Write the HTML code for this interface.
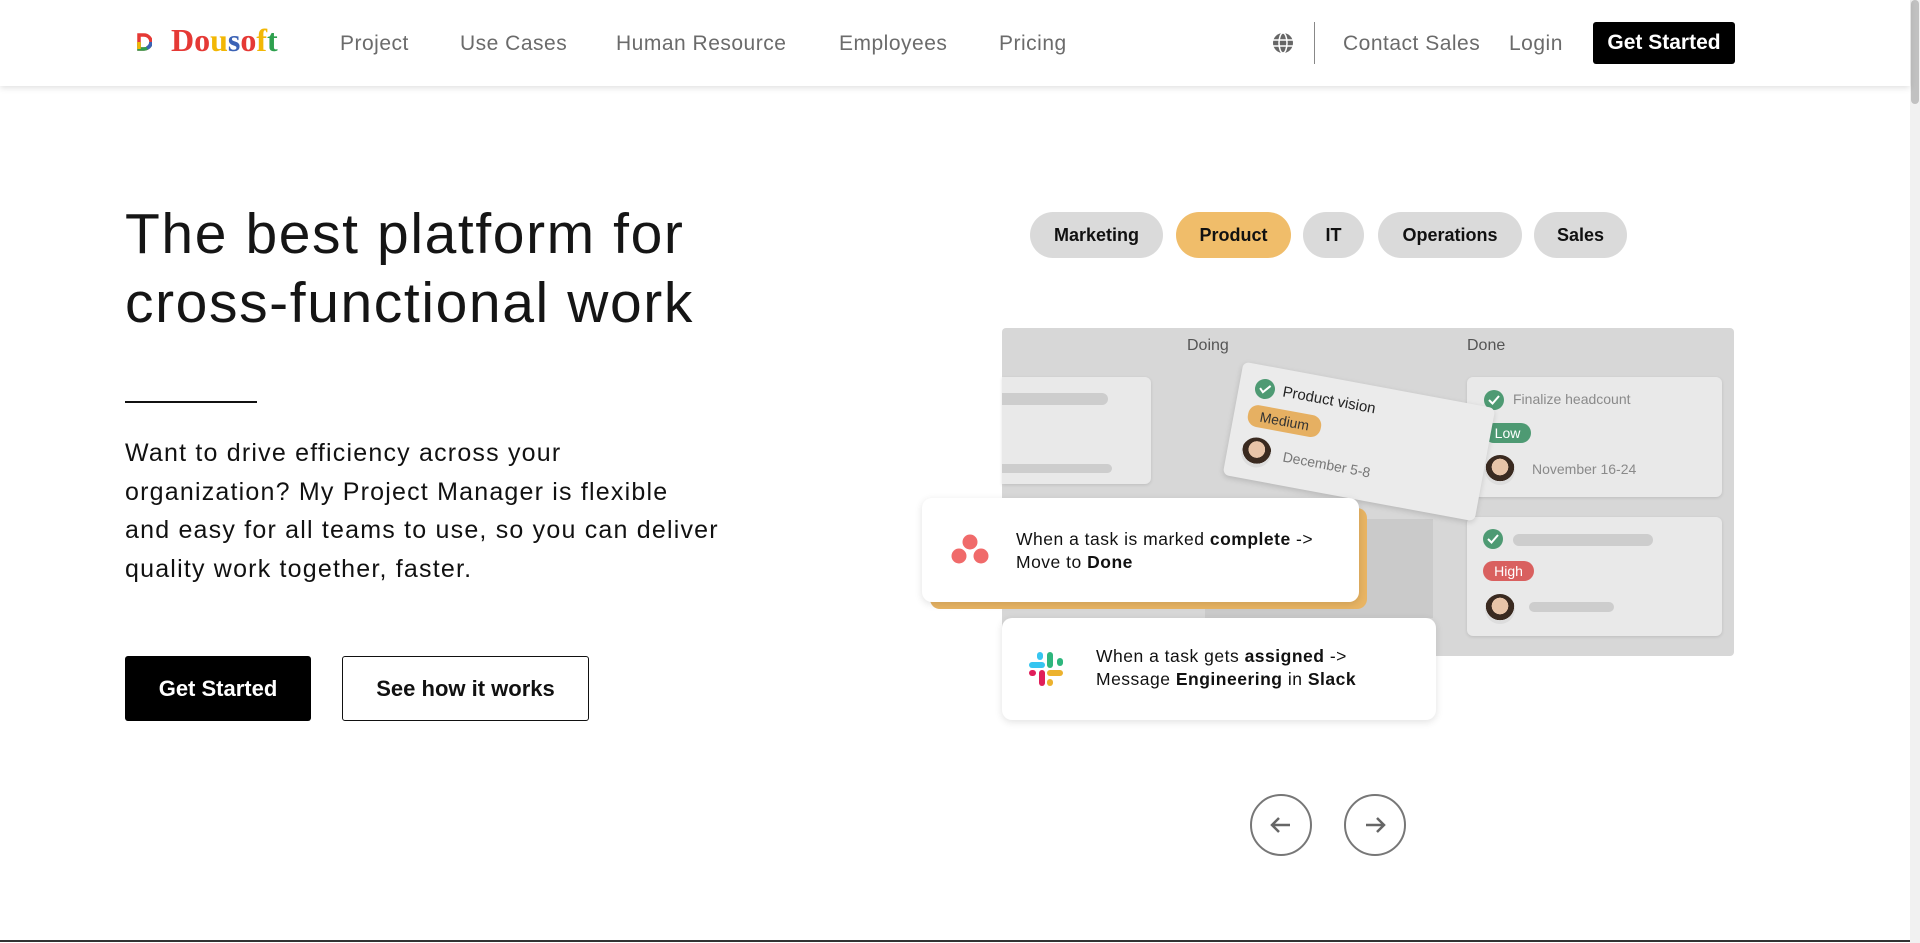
<!DOCTYPE html>
<html><head><meta charset="utf-8"><style>
*{margin:0;padding:0;box-sizing:border-box}
body{width:1920px;height:943px;overflow:hidden;background:#fff;font-family:"Liberation Sans",sans-serif;position:relative;color:#111}
.a{position:absolute}
.hdr{left:0;top:0;width:1910px;height:86px;background:#fff;box-shadow:0 2px 6px rgba(0,0,0,.12);z-index:5}
.nav{top:32px;font-size:21px;color:#6b6b6b;white-space:nowrap;letter-spacing:.5px}
.sb{left:1910px;top:0;width:10px;height:943px;background:#f1f1f1}
.sbt{left:1911px;top:0;width:8px;height:104px;background:#c1c1c1;border-radius:4px}
.tab{top:212px;height:46px;border-radius:23px;background:#dadada;font-size:18px;font-weight:bold;color:#111;display:flex;align-items:center;justify-content:center}
.card{background:#e9e9e9;border-radius:6px;box-shadow:0 1px 3px rgba(0,0,0,.12)}
.bar{background:#cdcdcd;border-radius:6px;height:12px}
.chk{width:20px;height:20px;border-radius:50%;background:#4e9a73;display:flex;align-items:center;justify-content:center}
.pill{border-radius:10px;color:#fff;font-size:14px;display:flex;align-items:center;justify-content:center}
.av{border-radius:50%;background:radial-gradient(circle at 50% 40%,#e8c4a8 0 35%,#3a2a20 36% 60%,#ddd 61%)}
.sm{font-size:14px;color:#8a8a8a;white-space:nowrap}
.ct{font-size:17.5px;line-height:23px;color:#111;white-space:nowrap;letter-spacing:.5px}
</style></head><body>
<div class="a hdr">
  <svg class="a" style="left:136px;top:33px" width="16" height="18" viewBox="0 0 16 18"><path d="M3 2h5a7 7 0 0 1 0 14H3z" fill="none" stroke="#e53935" stroke-width="3.5"/><path d="M3 9v7h5a7 7 0 0 0 7-7" fill="none" stroke="#2ea04e" stroke-width="3.5"/><path d="M3 9v7" stroke="#f2b705" stroke-width="3.5"/><path d="M15 9a7 7 0 0 1-4 6" stroke="#3b62b5" stroke-width="3.5" fill="none"/></svg>
  <div class="a" style="left:171px;top:22px;font-size:32px;font-weight:bold;font-family:'Liberation Serif',serif;letter-spacing:0"><span style="color:#e53935">D</span><span style="color:#e53935">o</span><span style="color:#f2b705">u</span><span style="color:#3b62b5">s</span><span style="color:#e53935">o</span><span style="color:#f2b705">f</span><span style="color:#2ea04e">t</span></div>
  <div class="a nav" style="left:340px">Project</div>
  <div class="a nav" style="left:460px">Use Cases</div>
  <div class="a nav" style="left:616px">Human Resource</div>
  <div class="a nav" style="left:839px">Employees</div>
  <div class="a nav" style="left:999px">Pricing</div>
  <svg class="a" style="left:1272px;top:32px" width="22" height="22" viewBox="0 0 22 22"><circle cx="11" cy="11" r="10" fill="#666"/><g stroke="#fff" stroke-width="1.5" fill="none"><ellipse cx="11" cy="11" rx="4" ry="10"/><line x1="1" y1="8" x2="21" y2="8"/><line x1="1" y1="14" x2="21" y2="14"/></g></svg>
  <div class="a" style="left:1314px;top:22px;width:1px;height:42px;background:#888"></div>
  <div class="a nav" style="left:1343px">Contact Sales</div>
  <div class="a nav" style="left:1509px">Login</div>
  <div class="a" style="left:1593px;top:22px;width:142px;height:42px;background:#000;border-radius:3px;color:#fff;font-size:21px;font-weight:bold;display:flex;align-items:center;justify-content:center">Get Started</div>
</div>
<div class="a sb"></div><div class="a sbt"></div>

<div class="a" style="left:125px;top:200px;font-size:57px;line-height:69px;color:#151515;white-space:nowrap;letter-spacing:1.6px">The best platform for<br>cross-functional work</div>
<div class="a" style="left:125px;top:401px;width:132px;height:2px;background:#111"></div>
<div class="a" style="left:125px;top:434px;font-size:25px;line-height:38.5px;color:#111;letter-spacing:1.2px;white-space:nowrap">Want to drive efficiency across your<br>organization? My Project Manager is flexible<br>and easy for all teams to use, so you can deliver<br>quality work together, faster.</div>
<div class="a" style="left:125px;top:656px;width:186px;height:65px;background:#000;border-radius:3px;color:#fff;font-size:22px;font-weight:bold;display:flex;align-items:center;justify-content:center">Get Started</div>
<div class="a" style="left:342px;top:656px;width:247px;height:65px;border:1.5px solid #111;border-radius:3px;color:#111;font-size:22px;font-weight:bold;display:flex;align-items:center;justify-content:center">See how it works</div>

<div class="a tab" style="left:1030px;width:133px">Marketing</div>
<div class="a tab" style="left:1176px;width:115px;background:#f0bd6a">Product</div>
<div class="a tab" style="left:1303px;width:61px">IT</div>
<div class="a tab" style="left:1378px;width:144px">Operations</div>
<div class="a tab" style="left:1534px;width:93px">Sales</div>

<div class="a" style="left:1002px;top:328px;width:732px;height:328px;background:#d7d7d7;border-radius:4px"></div>
<div class="a" style="left:1187px;top:337px;font-size:16px;color:#555">Doing</div>
<div class="a" style="left:1467px;top:337px;font-size:16px;color:#555">Done</div>
<div class="a card" style="left:1002px;top:377px;width:149px;height:107px;border-radius:0 6px 6px 0"></div>
<div class="a bar" style="left:1002px;top:393px;width:106px;border-radius:0 6px 6px 0"></div>
<div class="a bar" style="left:1002px;top:464px;width:110px;height:9px;border-radius:0 6px 6px 0"></div>
<div class="a" style="left:1205px;top:519px;width:228px;height:99px;background:#cacaca"></div>

<div class="a card" style="left:1467px;top:377px;width:255px;height:120px"></div>
<div class="a chk" style="left:1484px;top:390px"><svg width="12" height="10"><path d="M1 5l3.5 3.5L11 1" stroke="#fff" stroke-width="2" fill="none"/></svg></div>
<div class="a sm" style="left:1513px;top:391px">Finalize headcount</div>
<div class="a pill" style="left:1484px;top:423px;width:47px;height:20px;background:#4e9a73">Low</div>
<div class="a av" style="left:1485px;top:455px;width:30px;height:30px"></div>
<div class="a sm" style="left:1532px;top:461px">November 16-24</div>

<div class="a card" style="left:1467px;top:517px;width:255px;height:119px"></div>
<div class="a chk" style="left:1483px;top:529px"><svg width="12" height="10"><path d="M1 5l3.5 3.5L11 1" stroke="#fff" stroke-width="2" fill="none"/></svg></div>
<div class="a bar" style="left:1513px;top:534px;width:140px"></div>
<div class="a pill" style="left:1483px;top:561px;width:51px;height:20px;background:#d9605f">High</div>
<div class="a av" style="left:1485px;top:594px;width:30px;height:30px"></div>
<div class="a bar" style="left:1529px;top:602px;width:85px;height:10px"></div>

<div class="a card" style="left:1231px;top:384px;width:256px;height:115px;transform:rotate(10.5deg);background:#ebebeb;box-shadow:0 2px 6px rgba(0,0,0,.15)">
  <div class="a chk" style="left:16px;top:13px"><svg width="12" height="10"><path d="M1 5l3.5 3.5L11 1" stroke="#fff" stroke-width="2" fill="none"/></svg></div>
  <div class="a" style="left:44px;top:14px;font-size:15px;color:#222">Product vision</div>
  <div class="a pill" style="left:14px;top:40px;width:74px;height:22px;background:#e6b062;color:#333">Medium</div>
  <div class="a av" style="left:14px;top:72px;width:30px;height:30px"></div>
  <div class="a sm" style="left:56px;top:78px;color:#777">December 5-8</div>
</div>

<div class="a" style="left:930px;top:508px;width:437px;height:101px;background:#e8b463;border-radius:10px"></div>
<div class="a" style="left:922px;top:498px;width:437px;height:104px;background:#fff;border-radius:10px;box-shadow:0 2px 8px rgba(0,0,0,.12)">
  <svg class="a" style="left:26px;top:36px" width="44" height="32"><circle cx="22" cy="8" r="7.5" fill="#f06a6a"/><circle cx="11" cy="22" r="7.5" fill="#f06a6a"/><circle cx="33" cy="22" r="7.5" fill="#f06a6a"/></svg>
  <div class="a ct" style="left:94px;top:30px">When a task is marked <b>complete</b> -&gt;<br>Move to <b>Done</b></div>
</div>
<div class="a" style="left:1002px;top:618px;width:434px;height:102px;background:#fff;border-radius:10px;box-shadow:0 2px 8px rgba(0,0,0,.12)">
  <svg class="a" style="left:26px;top:33px" width="40" height="36" viewBox="0 0 40 36"><g stroke-linecap="round" stroke-width="6"><line x1="22" y1="4" x2="22" y2="14" stroke="#2eb67d"/><line x1="32" y1="10" x2="32" y2="12" stroke="#2eb67d"/><line x1="4" y1="14" x2="14" y2="14" stroke="#36c5f0"/><line x1="12" y1="4" x2="12" y2="6" stroke="#36c5f0"/><line x1="14" y1="22" x2="14" y2="32" stroke="#e01e5a"/><line x1="4" y1="22" x2="5" y2="22" stroke="#e01e5a"/><line x1="22" y1="22" x2="32" y2="22" stroke="#ecb22e"/><line x1="22" y1="31" x2="22" y2="32" stroke="#ecb22e"/></g></svg>
  <div class="a ct" style="left:94px;top:27px">When a task gets <b>assigned</b> -&gt;<br>Message <b>Engineering</b> in <b>Slack</b></div>
</div>

<svg class="a" style="left:1248px;top:792px" width="160" height="66"><g fill="none" stroke="#777" stroke-width="2"><circle cx="33" cy="33" r="30"/><circle cx="127" cy="33" r="30"/><path d="M42 33H24M31 26l-7 7 7 7M118 33h18M129 26l7 7-7 7" stroke="#666" stroke-width="2.5"/></g></svg>
<div class="a" style="left:0;top:940px;width:1910px;height:2px;background:#333"></div>
</body></html>
